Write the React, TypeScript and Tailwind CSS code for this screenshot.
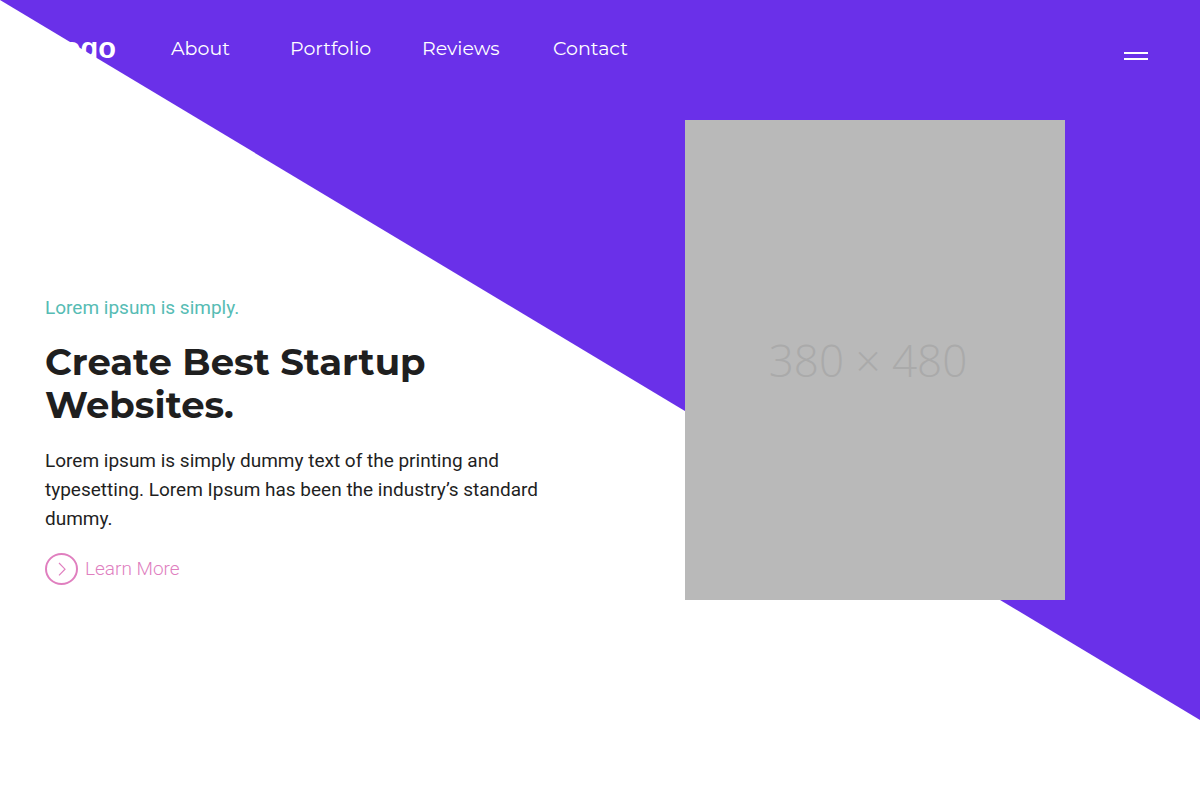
import React from "react";

const navLinks = ["About", "Portfolio", "Reviews", "Contact"];

function Header() {
  return (
    <header className="flex items-start justify-between pl-[45px] pr-[52px] pt-8 text-white">
      <div className="flex items-start">
        <a
          href="#"
          className="w-[126px] font-['Liberation_Sans',Arial,sans-serif] text-[29px] font-bold leading-8"
        >
          Logo
        </a>
        <nav>
          <ul className="grid grid-cols-[119px_132px_131px_auto] font-[Montserrat,Inter,sans-serif] text-[19px] leading-[34px]">
            {navLinks.map((link) => (
              <li key={link}>
                <a href={`#${link.toLowerCase()}`}>{link}</a>
              </li>
            ))}
          </ul>
        </nav>
      </div>
      <button
        type="button"
        aria-label="Open menu"
        className="mt-5 flex w-6 flex-col gap-1"
      >
        <span className="h-0.5 w-full bg-white" />
        <span className="h-0.5 w-full bg-white" />
      </button>
    </header>
  );
}

function Hero() {
  return (
    <section className="flex items-start justify-between pl-[45px] pr-[135px] pt-[54px]">
      <div className="max-w-[510px] pt-[174px] font-[Roboto,sans-serif] text-[19px] text-[#1f1f1f]">
        <p className="leading-7 text-[#56bcb4]">Lorem ipsum is simply.</p>
        <h1 className="mt-[18px] max-w-[420px] font-[Montserrat,Inter,sans-serif] text-[37px] font-bold leading-[43px]">
          Create Best Startup Websites.
        </h1>
        <p className="mt-5 leading-[29px]">
          Lorem ipsum is simply dummy text of the printing and typesetting.
          Lorem Ipsum has been the industry’s standard dummy.
        </p>
        <a
          href="#about"
          className="mt-5 inline-flex items-center gap-[7px] font-light leading-8 text-[#e07fbf]"
        >
          <svg
            viewBox="0 0 33 32"
            className="h-8 w-[33px]"
            fill="none"
            stroke="currentColor"
            aria-hidden="true"
          >
            <ellipse cx="16.5" cy="16" rx="15.5" ry="15" strokeWidth="2" />
            <path d="M14 10l6 6.2-6 6.2" strokeWidth="1.2" />
          </svg>
          Learn More
        </a>
      </div>
      <div className="flex h-[480px] w-[380px] shrink-0 items-center justify-center bg-[#b9b9b9] pr-3.5 font-['Open_Sans',sans-serif] text-[44px] font-light text-[#aaaaaa]">
        380 × 480
      </div>
    </section>
  );
}

export default function App() {
  return (
    <div className="relative isolate min-h-screen overflow-hidden bg-white">
      {/* Diagonal background */}
      <div className="absolute inset-x-0 top-0 -z-10 h-[90vh] bg-[#6a30e9] [clip-path:polygon(0_0,100%_0,100%_100%)]" />
      <Header />
      <Hero />
    </div>
  );
}
